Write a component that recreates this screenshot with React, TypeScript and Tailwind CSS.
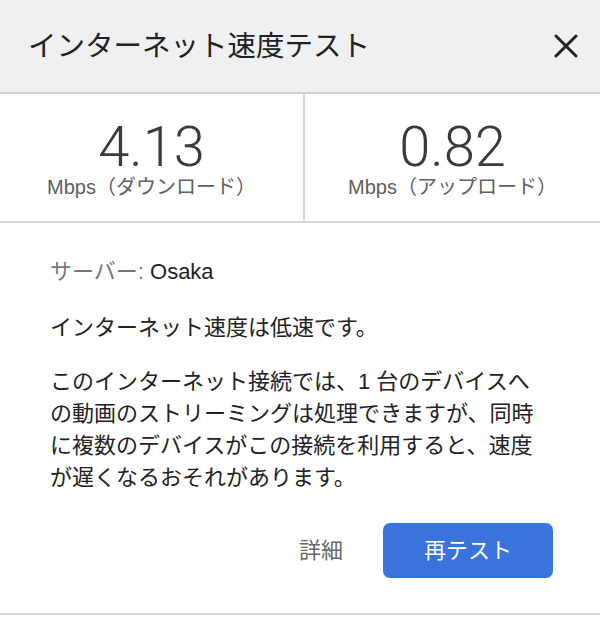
import React from "react";

const font = {
  fontFamily: '"Liberation Sans", "Noto Sans CJK JP", sans-serif',
};

const Stat = ({ value, label }: { value: string; label: string }) => (
  <div className="flex flex-1 flex-col items-center pt-[23px]">
    <div className="font-['Roboto',sans-serif] text-[56px] leading-[60px] font-light text-[#3a3a3a]">{value}</div>
    <div className="text-[20px] leading-[20px] text-[#606060]">{label}</div>
  </div>
);

const App = () => {
  const lines = [
    "このインターネット接続では、1 台のデバイスへ",
    "の動画のストリーミングは処理できますが、同時",
    "に複数のデバイスがこの接続を利用すると、速度",
    "が遅くなるおそれがあります。",
  ];

  return (
    <div className="w-[600px] h-[617px] bg-white" style={font}>
      <div className="flex h-[94px] items-center justify-between border-b-2 border-[#d0d0d0] bg-[#eff0f2] pl-[28px] pr-[22px]">
        <h1 className="text-[28.5px] text-[#222]">インターネット速度テスト</h1>
        <svg width="24" height="24" viewBox="0 0 24 24" className="text-[#222]">
          <path d="M2 2 L22 22 M22 2 L2 22" stroke="currentColor" strokeWidth="3" strokeLinecap="round" />
        </svg>
      </div>

      <div className="flex h-[129px] border-b-2 border-[#d8d8d8]">
        <div className="flex w-[305px] border-r-2 border-[#d8d8d8]">
          <Stat value="4.13" label="Mbps（ダウンロード）" />
        </div>
        <Stat value="0.82" label="Mbps（アップロード）" />
      </div>

      <div className="border-b-2 border-[#d8d8d8] pl-[50px] pr-[47px] pt-[33px] pb-[35px]">
        <p className="text-[22px] leading-[32px]">
          <span className="text-[#777]">サーバー: </span>
          <span className="text-[#222]">Osaka</span>
        </p>
        <p className="mt-[24px] text-[22px] leading-[32px] text-[#222]">
          インターネット速度は低速です。
        </p>
        <div className="mt-[22px] text-[22px] leading-[32px] text-[#222]">
          {lines.map((l) => (
            <div key={l} className="whitespace-nowrap">
              {l}
            </div>
          ))}
        </div>
        <div className="mt-[29px] flex items-center justify-end gap-[40px]">
          <button className="text-[22px] text-[#666]">詳細</button>
          <button className="flex h-[55px] w-[170px] items-center justify-center rounded-[7px] bg-[#3a73db] text-[22px] text-white">
            再テスト
          </button>
        </div>
      </div>
    </div>
  );
};

export default App;
